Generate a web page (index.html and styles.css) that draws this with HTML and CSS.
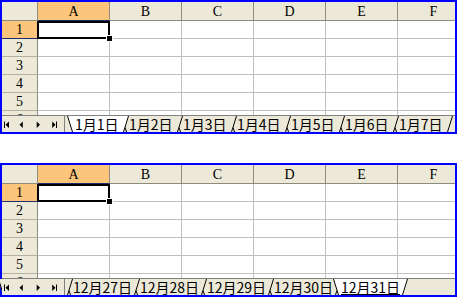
FILE: index.html
```html
<!DOCTYPE html>
<html lang="ja">
<head>
<meta charset="utf-8">
<title>Sheets</title>
<link rel="stylesheet" href="styles.css">
</head>
<body>
<div class="sheet">
  <div class="grid">
    <div class="corner"></div>
    <div class="colh sel">A</div><div class="colh">B</div><div class="colh">C</div><div class="colh">D</div><div class="colh">E</div><div class="colh">F</div>
    <div class="rowh sel">1</div><div class="cell active"><span class="handle"></span></div><div class="cell"></div><div class="cell"></div><div class="cell"></div><div class="cell"></div><div class="cell"></div>
    <div class="rowh">2</div><div class="cell"></div><div class="cell"></div><div class="cell"></div><div class="cell"></div><div class="cell"></div><div class="cell"></div>
    <div class="rowh">3</div><div class="cell"></div><div class="cell"></div><div class="cell"></div><div class="cell"></div><div class="cell"></div><div class="cell"></div>
    <div class="rowh">4</div><div class="cell"></div><div class="cell"></div><div class="cell"></div><div class="cell"></div><div class="cell"></div><div class="cell"></div>
    <div class="rowh">5</div><div class="cell"></div><div class="cell"></div><div class="cell"></div><div class="cell"></div><div class="cell"></div><div class="cell"></div>
    <div class="rowh">6</div><div class="cell"></div><div class="cell"></div><div class="cell"></div><div class="cell"></div><div class="cell"></div><div class="cell"></div>
  </div>
  <div class="tabbar">
    <div class="nav">
      <svg width="62" height="16" viewBox="0 0 62 16">
        <path d="M2 5.5h1v6.5h-1z M3.5 8.75 L7 5.5 L7 12 Z M17.5 8.75 L20.8 5.5 L20.8 12 Z M34.7 5.5 L38 8.75 L34.7 12 Z M50.2 5.5 L53.5 8.75 L50.2 12 Z M54 5.5h1v6.5h-1z"/>
      </svg>
    </div>
    <div class="tabs">
      <div class="tab tab-short active"><svg class="tab-shape" viewBox="0 0 62 16" preserveAspectRatio="none"><polygon class="tab-fill" points="0,0 62,0 57,16 5,16"/><path class="tab-edge" d="M0.5 0 L5.5 16 M61.5 0 L56.5 16"/></svg><span class="tab-label">1月1日</span></div>
      <div class="tab tab-short"><svg class="tab-shape" viewBox="0 0 62 16" preserveAspectRatio="none"><polygon class="tab-fill" points="0,0 62,0 57,16 5,16"/><path class="tab-edge" d="M0.5 0 L5.5 16 M61.5 0 L56.5 16"/></svg><span class="tab-label">1月2日</span></div>
      <div class="tab tab-short"><svg class="tab-shape" viewBox="0 0 62 16" preserveAspectRatio="none"><polygon class="tab-fill" points="0,0 62,0 57,16 5,16"/><path class="tab-edge" d="M0.5 0 L5.5 16 M61.5 0 L56.5 16"/></svg><span class="tab-label">1月3日</span></div>
      <div class="tab tab-short"><svg class="tab-shape" viewBox="0 0 62 16" preserveAspectRatio="none"><polygon class="tab-fill" points="0,0 62,0 57,16 5,16"/><path class="tab-edge" d="M0.5 0 L5.5 16 M61.5 0 L56.5 16"/></svg><span class="tab-label">1月4日</span></div>
      <div class="tab tab-short"><svg class="tab-shape" viewBox="0 0 62 16" preserveAspectRatio="none"><polygon class="tab-fill" points="0,0 62,0 57,16 5,16"/><path class="tab-edge" d="M0.5 0 L5.5 16 M61.5 0 L56.5 16"/></svg><span class="tab-label">1月5日</span></div>
      <div class="tab tab-short"><svg class="tab-shape" viewBox="0 0 62 16" preserveAspectRatio="none"><polygon class="tab-fill" points="0,0 62,0 57,16 5,16"/><path class="tab-edge" d="M0.5 0 L5.5 16 M61.5 0 L56.5 16"/></svg><span class="tab-label">1月6日</span></div>
      <div class="tab tab-short"><svg class="tab-shape" viewBox="0 0 62 16" preserveAspectRatio="none"><polygon class="tab-fill" points="0,0 62,0 57,16 5,16"/><path class="tab-edge" d="M0.5 0 L5.5 16 M61.5 0 L56.5 16"/></svg><span class="tab-label">1月7日</span></div>
    </div>
  </div>
</div>

<div class="sheet">
  <div class="grid">
    <div class="corner"></div>
    <div class="colh sel">A</div><div class="colh">B</div><div class="colh">C</div><div class="colh">D</div><div class="colh">E</div><div class="colh">F</div>
    <div class="rowh sel">1</div><div class="cell active"><span class="handle"></span></div><div class="cell"></div><div class="cell"></div><div class="cell"></div><div class="cell"></div><div class="cell"></div>
    <div class="rowh">2</div><div class="cell"></div><div class="cell"></div><div class="cell"></div><div class="cell"></div><div class="cell"></div><div class="cell"></div>
    <div class="rowh">3</div><div class="cell"></div><div class="cell"></div><div class="cell"></div><div class="cell"></div><div class="cell"></div><div class="cell"></div>
    <div class="rowh">4</div><div class="cell"></div><div class="cell"></div><div class="cell"></div><div class="cell"></div><div class="cell"></div><div class="cell"></div>
    <div class="rowh">5</div><div class="cell"></div><div class="cell"></div><div class="cell"></div><div class="cell"></div><div class="cell"></div><div class="cell"></div>
    <div class="rowh">6</div><div class="cell"></div><div class="cell"></div><div class="cell"></div><div class="cell"></div><div class="cell"></div><div class="cell"></div>
  </div>
  <div class="tabbar">
    <div class="nav">
      <svg width="62" height="16" viewBox="0 0 62 16">
        <path d="M2 5.5h1v6.5h-1z M3.5 8.75 L7 5.5 L7 12 Z M17.5 8.75 L20.8 5.5 L20.8 12 Z M34.7 5.5 L38 8.75 L34.7 12 Z M50.2 5.5 L53.5 8.75 L50.2 12 Z M54 5.5h1v6.5h-1z"/>
      </svg>
    </div>
    <div class="tabs tabs-scrolled">
      <div class="tab tab-long tab-partial"><svg class="tab-shape" viewBox="0 0 75 16" preserveAspectRatio="none"><polygon class="tab-fill" points="0,0 75,0 70,16 5,16"/><path class="tab-edge" d="M0.5 0 L5.5 16 M74.5 0 L69.5 16"/></svg></div>
      <div class="tab tab-long"><svg class="tab-shape" viewBox="0 0 75 16" preserveAspectRatio="none"><polygon class="tab-fill" points="0,0 75,0 70,16 5,16"/><path class="tab-edge" d="M0.5 0 L5.5 16 M74.5 0 L69.5 16"/></svg><span class="tab-label">12月27日</span></div>
      <div class="tab tab-long"><svg class="tab-shape" viewBox="0 0 75 16" preserveAspectRatio="none"><polygon class="tab-fill" points="0,0 75,0 70,16 5,16"/><path class="tab-edge" d="M0.5 0 L5.5 16 M74.5 0 L69.5 16"/></svg><span class="tab-label">12月28日</span></div>
      <div class="tab tab-long"><svg class="tab-shape" viewBox="0 0 75 16" preserveAspectRatio="none"><polygon class="tab-fill" points="0,0 75,0 70,16 5,16"/><path class="tab-edge" d="M0.5 0 L5.5 16 M74.5 0 L69.5 16"/></svg><span class="tab-label">12月29日</span></div>
      <div class="tab tab-long"><svg class="tab-shape" viewBox="0 0 75 16" preserveAspectRatio="none"><polygon class="tab-fill" points="0,0 75,0 70,16 5,16"/><path class="tab-edge" d="M0.5 0 L5.5 16 M74.5 0 L69.5 16"/></svg><span class="tab-label">12月30日</span></div>
      <div class="tab tab-long active"><svg class="tab-shape" viewBox="0 0 75 16" preserveAspectRatio="none"><polygon class="tab-fill" points="0,0 75,0 70,16 5,16"/><path class="tab-edge" d="M0.5 0 L5.5 16 M74.5 0 L69.5 16"/></svg><span class="tab-label tab-label-underline">12月31日</span></div>
    </div>
  </div>
</div>
</body>
</html>
```

FILE: styles.css
```css
html, body {
  margin: 0;
  padding: 0;
  background: #ffffff;
}

.sheet {
  width: 457px;
  height: 134px;
  box-sizing: border-box;
  border: 2px solid #0000ff;
  display: flex;
  flex-direction: column;
  background: #ffffff;
}

.sheet + .sheet {
  margin-top: 29px;
}

.grid {
  flex: none;
  height: 113px;
  display: grid;
  grid-template-columns: 36px repeat(6, 72px);
  grid-template-rows: 19px;
  grid-auto-rows: 18px;
  overflow: hidden;
}

.corner,
.colh,
.rowh,
.cell {
  box-sizing: border-box;
}

.corner {
  background: #ece9d8;
  border-right: 1px solid #8e8c7e;
  border-bottom: 1px solid #8e8c7e;
}

.colh {
  background: #ece9d8;
  border-right: 1px solid #8e8c7e;
  border-bottom: 1px solid #8e8c7e;
  font: 14px/17px "Liberation Serif", serif;
  color: #000;
  text-align: center;
  padding-top: 1px;
}

.rowh {
  background: #ece9d8;
  border-right: 1px solid #8e8c7e;
  border-bottom: 1px solid #b4b1a2;
  font: 14px/17px "Liberation Serif", serif;
  color: #000;
  text-align: center;
}

.colh.sel,
.rowh.sel {
  background: #fdc47c;
  border-bottom-color: #1c2d6e;
}

.cell {
  background: #ffffff;
  border-right: 1px solid #c0c0c0;
  border-bottom: 1px solid #c0c0c0;
}

.cell.active {
  position: relative;
}

.cell.active::after {
  content: "";
  position: absolute;
  left: -1px;
  top: 0;
  width: 73px;
  height: 18px;
  box-sizing: border-box;
  border: 2px solid #000;
}

.handle {
  position: absolute;
  left: 68px;
  top: 14px;
  width: 5px;
  height: 5px;
  background: #000;
  border: 1px solid #fff;
  z-index: 1;
}

.tabbar {
  flex: none;
  height: 17px;
  box-sizing: border-box;
  border-top: 1px solid #808080;
  background: #ece9d8;
  display: flex;
}

.nav {
  flex: none;
  position: relative;
  z-index: 30;
  width: 63px;
  height: 16px;
  box-sizing: border-box;
  border-right: 1px solid #808080;
  background: #ece9d8;
}

.nav svg {
  display: block;
  fill: #000;
}

.tabs {
  flex: 1;
  min-width: 0;
  display: flex;
  padding-left: 2px;
}

.tabs.tabs-scrolled {
  padding-left: 0;
}

.tab {
  flex: none;
  position: relative;
  height: 16px;
  box-sizing: border-box;
  margin-left: -8px;
  padding-left: 8px;
  display: flex;
  align-items: center;
  justify-content: flex-start;
}

.tab:first-child {
  margin-left: 0;
}

.tab.tab-short { width: 62px; }
.tab.tab-long { width: 75px; }

.tab.tab-partial {
  margin-left: -67px;
}

.tab:nth-child(1) { z-index: 9; }
.tab:nth-child(2) { z-index: 8; }
.tab:nth-child(3) { z-index: 7; }
.tab:nth-child(4) { z-index: 6; }
.tab:nth-child(5) { z-index: 5; }
.tab:nth-child(6) { z-index: 4; }
.tab:nth-child(7) { z-index: 3; }
.tab:nth-child(8) { z-index: 2; }
.tab.active { z-index: 20; }

.tab-shape {
  position: absolute;
  left: 0;
  top: 0;
  width: 100%;
  height: 100%;
  overflow: visible;
}

.tab-fill {
  fill: #ece9d8;
}

.tab.active .tab-fill {
  fill: #ffffff;
}

.tab-edge {
  fill: none;
  stroke: #000;
  stroke-width: 1;
}

.tab-label {
  position: relative;
  font: 14px/15px "Noto Sans CJK JP", sans-serif;
  color: #000;
  white-space: nowrap;
}

.tab-label-underline {
  text-decoration: underline;
}
```
